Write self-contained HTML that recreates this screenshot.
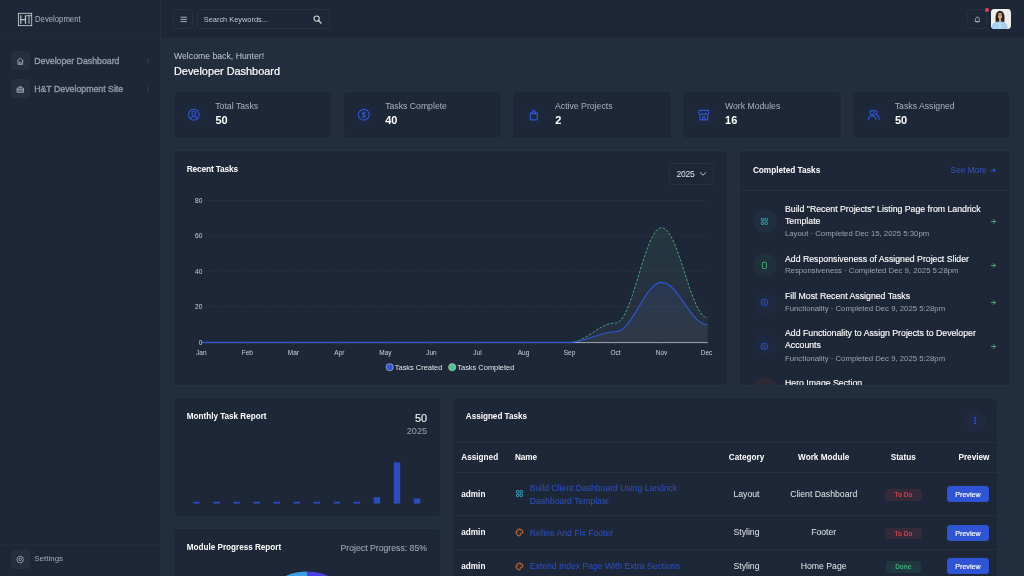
<!DOCTYPE html>
<html lang="en">
<head>
<meta charset="utf-8">
<title>Developer Dashboard</title>
<style>
*{box-sizing:border-box;margin:0;padding:0}
html,body{width:1024px;height:576px;overflow:hidden;background:#222d3d;font-family:"Liberation Sans",sans-serif;color:#fff}
body{position:relative}
.abs{position:absolute}
.t{position:absolute;white-space:nowrap;line-height:1}
.b{font-weight:bold}
/* sidebar */
#sidebar{position:absolute;left:0;top:0;width:161px;height:576px;background:#1e2737;border-right:1px solid #253143}
#sb-head{position:absolute;left:0;top:0;width:160px;height:39px;border-bottom:1px solid #212b3b}
#sb-foot{position:absolute;left:0;top:544px;width:160px;height:32px;border-top:1px solid #222c3c}
.navico{position:absolute;left:10.8px;width:19.4px;height:19.2px;border-radius:3px;background:#252f3f}
.navico svg{position:absolute;left:5px;top:5.7px;width:8.6px;height:8.6px}
.navtxt{position:absolute;left:34.2px;font-size:8.78px;color:#8f98a7;-webkit-text-stroke:0.4px #8f98a7;white-space:nowrap;line-height:1}
.navchev{position:absolute;left:146px;width:4px;height:6px}
/* topbar */
#topbar{position:absolute;left:161px;top:0;width:863px;height:39px;background:#1e2737;border-bottom:1px solid #243042}
.tbtn{position:absolute;width:20px;height:20px;border:1px solid #253145;border-radius:3.5px;background:#1e2737}
/* cards */
.card{position:absolute;background:#1e2737;border-radius:3.5px;box-shadow:0 0 0 0.7px #273446}
.stat-l{position:absolute;left:41.6px;top:10.2px;font-size:8.7px;color:#aab2bf;white-space:nowrap;line-height:1}
.stat-v{position:absolute;left:41.7px;top:23.3px;font-size:11px;color:#fff;font-weight:bold;white-space:nowrap;line-height:1}
.stat-i{position:absolute;left:8.5px;top:10.8px;width:24px;height:24px;border-radius:50%;background:#1e283c}
.stat-i svg{position:absolute;left:5.2px;top:5.2px;width:13.6px;height:13.6px}
.hline{position:absolute;height:1px;background:#253040}
.ci{position:absolute;margin-top:-0.1px;left:12.9px;width:24px;height:24px;border-radius:50%}
.ci svg{position:absolute;left:7.5px;top:7.7px;width:8.8px;height:8.8px}
.ct{position:absolute;left:45.2px;margin-top:0.7px;font-size:8.74px;color:#fff;white-space:nowrap;line-height:1;-webkit-text-stroke:0.14px #fff}
.cs{position:absolute;left:45.2px;margin-top:0.5px;font-size:7.77px;color:#9aa3b1;white-space:nowrap;line-height:1}
.th{position:absolute;margin-top:1px;font-size:8.2px;font-weight:bold;color:#fff;white-space:nowrap;line-height:1}
.td{position:absolute;font-size:8.7px;color:#e3e6ea;white-space:nowrap;line-height:1}
.tl{position:absolute;font-size:8.62px;color:#2d50c8;white-space:nowrap;line-height:1}
.c{text-align:center}
.bdg{position:absolute;width:36.8px;height:11.6px;border-radius:3.2px;font-size:6.5px;font-weight:bold;text-align:center;line-height:12.2px;white-space:nowrap}
.bdg.red{background:#342a39;color:#c2424f}
.bdg.grn{background:#20393f;color:#3fa978}
.btn{position:absolute;left:494.4px;width:41.7px;height:16.1px;border-radius:3.2px;background:#2f55d4;color:#f4f6fb;font-size:7.1px;-webkit-text-stroke:0.18px #f4f6fb;text-align:center;line-height:18.6px;overflow:hidden}
</style>
</head>
<body>
<div id="root" style="position:absolute;left:0;top:0;width:1024px;height:576px;will-change:transform">

<!-- SIDEBAR -->
<div id="sidebar">
  <div id="sb-head">
    <svg class="abs" style="left:17px;top:12px" width="16" height="15" viewBox="0 0 16 15">
      <rect x="1.35" y="1.25" width="13.4" height="12.45" fill="none" stroke="#e3e6eb" stroke-width="0.75"/>
      <path d="M3.800 3.300V11.800M8.500 3.300V11.800M3.800 7.600H8.500" fill="none" stroke="#bfc4cc" stroke-width="1.25"/>
      <path d="M9.500 3.700H14.400M12 3.700V11.800" fill="none" stroke="#bfc4cc" stroke-width="1.0"/>
    </svg>
    <div class="t" style="left:35.2px;top:15.2px;font-size:9px;color:#bcc1ca;transform:scaleX(0.86);transform-origin:0 0;opacity:0.9">Development</div>
  </div>
  <div class="navico" style="top:51px"><svg viewBox="0 0 24 24" fill="none" stroke="#b4bbc6" stroke-width="2.1" stroke-linejoin="round"><path d="M3 11.5L12 3.5L21 11.5M5.5 9.5V20.5H18.5V9.5M9.5 20.5V14.5H14.5V20.5"/></svg></div>
  <div class="navtxt" style="top:56.8px">Developer Dashboard</div>
  <svg class="navchev" style="top:58px" viewBox="0 0 4 6"><path d="M1 1L3 3L1 5" fill="none" stroke="#414c5d" stroke-width="0.8"/></svg>
  <div class="navico" style="top:79px"><svg viewBox="0 0 24 24" fill="none" stroke="#b4bbc6" stroke-width="2.1" stroke-linejoin="round"><path d="M3 8.500H21V20.500H3ZM8.500 8.500V5H15.500V8.500M3 13H21M3 16.800H21"/></svg></div>
  <div class="navtxt" style="top:84.8px">H&amp;T Development Site</div>
  <svg class="navchev" style="top:86px" viewBox="0 0 4 6"><path d="M1 1L3 3L1 5" fill="none" stroke="#414c5d" stroke-width="0.8"/></svg>
  <div id="sb-foot">
    <div class="navico" style="top:4.6px"><svg viewBox="0 0 24 24" fill="none" stroke="#b4bbc6" stroke-width="2.1"><circle cx="12" cy="12" r="3.6"/><path d="M12 3.2l2.2 1.5 2.6-.4 1.2 2.4 2.4 1.2-.4 2.6 1.5 2.2-1.5 2.2.4 2.6-2.4 1.2-1.2 2.4-2.6-.4-2.2 1.5-2.2-1.5-2.6.4-1.2-2.4-2.4-1.2.4-2.6L2.5 12.7 4 10.500l-.4-2.6 2.4-1.2 1.200-2.400 2.600.4z" stroke-linejoin="round"/></svg></div>
    <div class="navtxt" style="top:10.1px;font-size:8px;-webkit-text-stroke:0;color:#a3abb8">Settings</div>
  </div>
</div>

<!-- TOPBAR -->
<div id="topbar">
  <div class="tbtn" style="left:12px;top:9px"><svg class="abs" style="left:5.5px;top:5.6px" width="8" height="7" viewBox="0 0 8 7"><path d="M0.9 1.2H6.5M0.9 3.4H6.5M0.9 5.6H6.5" stroke="#d5d9e0" stroke-width="0.75" stroke-linecap="round"/></svg></div>
  <div class="tbtn" style="left:36px;top:9px;width:133px"></div>
  <div class="t" style="left:42.8px;top:15.7px;font-size:7.4px;color:#c3c9d3">Search Keywords...</div>
  <svg class="abs" style="left:151.6px;top:15.1px" width="9" height="9" viewBox="0 0 10 10"><circle cx="4" cy="4" r="2.9" fill="none" stroke="#d3d6db" stroke-width="1.2"/><path d="M6.200 6.200L8.800 8.800" stroke="#d3d6db" stroke-width="1.5" stroke-linecap="round"/></svg>
  <div class="tbtn" style="left:806px;top:9px"><svg class="abs" style="left:5.6px;top:5.7px" width="6.8" height="7.65" viewBox="0 0 8 9"><path d="M1.2 6.5C1.9 5.6 1.9 5 1.9 3.8C1.9 2.3 2.8 1.2 4 1.2C5.2 1.200 6.100 2.300 6.100 3.800C6.100 5 6.100 5.600 6.800 6.500Z" fill="none" stroke="#cfd4db" stroke-width="0.85" stroke-linejoin="round"/><path d="M3.1 7.3C3.400 8 4.600 8 4.900 7.300" fill="none" stroke="#cfd4db" stroke-width="0.85"/></svg></div>
  <div class="abs" style="left:823.6px;top:7.5px;width:4.4px;height:4.4px;border-radius:50%;background:#e2414f"></div>
  <div class="abs" id="avatar" style="left:830.1px;top:9.1px;width:19.5px;height:19.9px;border-radius:3.8px;background:#efeff0;overflow:hidden">
    <svg width="19.4" height="19.9" viewBox="0 0 20 20" preserveAspectRatio="none">
      <rect width="20" height="20" fill="#eeeeef"/><g transform="translate(-0.7,0)">
      <path d="M5.900 14.300C4.800 9 5 2 10 1.800C15 2 15.200 9 14.100 14.300Z" fill="#2d1f1a"/>
      <rect x="8.900" y="8.500" width="2.200" height="4.500" fill="#cfa48d"/>
      <ellipse cx="10" cy="6.700" rx="2.150" ry="2.900" fill="#d3a992"/>
      <path d="M7.900 6.100H12.100" stroke="#4a3a35" stroke-width="0.550"/>
      <path d="M1.300 20C1.300 14.600 4.300 12.800 8.600 12.500L10 13.700L11.400 12.500C15.700 12.800 17.400 14.600 17.400 20Z" fill="#a6cff1"/>
      <path d="M8.300 12.800L9.300 20H10.700L11.700 12.800L10 13.900Z" fill="#c3e0f8"/>
      <path d="M15.300 18.600L17.800 17.700L18 19.200L15.600 19.600Z" fill="#d9b29e"/></g>
    </svg>
  </div>
</div>

<!-- HEADINGS -->
<div class="t" style="left:174px;top:51.9px;font-size:8.7px;color:#c3c9d3">Welcome back, Hunter!</div>
<div class="t" style="left:174px;top:66.3px;font-size:10.9px;color:#fff;-webkit-text-stroke:0.2px #fff">Developer Dashboard</div>

<!-- STAT CARDS -->
<div class="card" style="left:173.70px;top:92.0px;width:157.2px;height:45.9px"><div class="stat-i"><svg viewBox="0 0 24 24" fill="none" stroke="#2f55d4" stroke-width="2"><circle cx="12" cy="12" r="9.5"/><circle cx="12" cy="9.5" r="3.4"/><path d="M5.800 19C7 15.500 9.500 14.700 12 14.700C14.500 14.700 17 15.500 18.200 19"/></svg></div><div class="stat-l">Total Tasks</div><div class="stat-v">50</div></div>
<div class="card" style="left:343.57px;top:92.0px;width:157.2px;height:45.9px"><div class="stat-i"><svg viewBox="0 0 24 24" fill="none" stroke="#2f55d4" stroke-width="2"><circle cx="12" cy="12" r="9.5"/><path d="M14.800 9.300C14.300 8.200 13.300 7.800 12 7.800C10.400 7.800 9.300 8.600 9.300 9.800C9.300 12.600 14.800 11.200 14.800 14.100C14.800 15.400 13.600 16.200 12 16.200C10.500 16.200 9.500 15.700 9.100 14.600M12 5.800V18.200" stroke-width="1.8"/></svg></div><div class="stat-l">Tasks Complete</div><div class="stat-v">40</div></div>
<div class="card" style="left:513.45px;top:92.0px;width:157.2px;height:45.9px"><div class="stat-i"><svg viewBox="0 0 24 24" fill="none" stroke="#2f55d4" stroke-width="2.1" stroke-linejoin="round"><path d="M5.8 9H18.2V19.4C18.2 20.3 17.500 21 16.600 21H7.400C6.500 21 5.800 20.300 5.800 19.400ZM9.500 11.800V7.300C9.500 5.600 10.500 4.500 12 4.500C13.500 4.500 14.500 5.600 14.500 7.300V11.800"/></svg></div><div class="stat-l">Active Projects</div><div class="stat-v">2</div></div>
<div class="card" style="left:683.33px;top:92.0px;width:157.2px;height:45.9px"><div class="stat-i"><svg viewBox="0 0 24 24" fill="none" stroke="#2f55d4" stroke-width="2" stroke-linejoin="round"><path d="M4.300 4.300H19.700L20.800 8.800C20.800 10.500 19.700 11.600 18 11.600C16.300 11.600 15 10.500 15 8.800C15 10.500 13.700 11.600 12 11.600C10.300 11.600 9 10.500 9 8.800C9 10.500 7.700 11.600 6 11.600C4.300 11.600 3.200 10.500 3.200 8.800ZM5.200 11.600V21H18.800V11.600M10 21V16H14V21"/></svg></div><div class="stat-l">Work Modules</div><div class="stat-v">16</div></div>
<div class="card" style="left:853.20px;top:92.0px;width:157.2px;height:45.9px"><div class="stat-i"><svg viewBox="0 0 24 24" fill="none" stroke="#2f55d4" stroke-width="2" stroke-linecap="round"><circle cx="9" cy="8" r="3.800"/><path d="M2.500 20C2.500 15.500 5.500 13.800 9 13.800C12.500 13.800 15.500 15.500 15.500 20M14.500 4.500C16.600 4.500 18 6 18 8C18 9.600 17.200 10.700 16 11.300C19 12 21.500 14 21.500 20"/></svg></div><div class="stat-l">Tasks Assigned</div><div class="stat-v">50</div></div>

<!-- RECENT TASKS -->
<div class="card" id="recent" style="left:173.7px;top:151.2px;width:553.6px;height:233.7px">
</div>
<div class="t b" style="left:186.7px;top:165.3px;font-size:8.4px;letter-spacing:-0.17px;color:#fff">Recent Tasks</div>
<div class="abs" style="left:669.4px;top:163.4px;width:44.8px;height:21.3px;border:1px solid #253145;border-radius:3.5px"></div>
<div class="t" style="left:676.6px;top:169.8px;font-size:8.5px;letter-spacing:-0.3px;color:#dfe3e9">2025</div>
<svg class="abs" style="left:699.2px;top:171.3px" width="8" height="6" viewBox="0 0 8 6"><path d="M1.400 1.700L4 4.200L6.600 1.700" fill="none" stroke="#d0d4db" stroke-width="0.95" stroke-linecap="round" stroke-linejoin="round"/></svg>
<svg class="abs" style="left:174px;top:190px" width="552" height="190" viewBox="174 190 552 190">
  <defs>
    <linearGradient id="gb" gradientUnits="userSpaceOnUse" x1="0" y1="282.4" x2="0" y2="342.4"><stop offset="0" stop-color="rgb(47,85,212)" stop-opacity="0.13"/><stop offset="1" stop-color="rgb(170,175,190)" stop-opacity="0.07"/></linearGradient>
    <linearGradient id="gg" gradientUnits="userSpaceOnUse" x1="0" y1="227.7" x2="0" y2="342.4"><stop offset="0" stop-color="rgb(79,174,131)" stop-opacity="0.12"/><stop offset="1" stop-color="rgb(160,165,175)" stop-opacity="0.06"/></linearGradient>
  </defs>
  <g stroke="#313d50" stroke-width="0.7" stroke-dasharray="1.1 1.1">
    <path d="M203.700 200.600H707.600M203.700 235.900H707.600M203.700 271.200H707.600M203.700 306.500H707.600"/>
  </g>
  <path d="M569.5 342.4 C586.6 342.4 598.5 323.0 615.6 323.0 C632.6 323.0 644.6 227.7 661.6 227.7 C678.6 227.7 690.6 317.7 707.6 317.7 V342.4Z" fill="url(#gg)"/>
  <path d="M569.5 342.4 C586.6 342.4 598.5 331.8 615.6 331.8 C632.6 331.8 644.6 282.4 661.6 282.4 C678.6 282.4 690.6 324.8 707.6 324.8 V342.4Z" fill="url(#gb)"/>
  <path d="M247.3 343.2V345.6M293.4 343.2V345.6M339.4 343.2V345.6M385.4 343.2V345.6M431.5 343.2V345.6M477.5 343.2V345.6M523.5 343.2V345.6M569.5 343.2V345.6M615.6 343.2V345.6M661.6 343.2V345.6M707.6 343.2V345.6" stroke="#384354" stroke-width="0.6"/>
  <path d="M201.3 342.6H707.6" stroke="#d9dde3" stroke-width="0.7"/>
  <path d="M201.3 342.4 L569.5 342.4 C586.6 342.4 598.5 323.0 615.6 323.0 C632.6 323.0 644.6 227.7 661.6 227.7 C678.6 227.7 690.6 317.7 707.6 317.7" fill="none" stroke="#4aa87e" stroke-width="1" stroke-dasharray="2.5 1.6"/>
  <path d="M201.3 342.4 L569.5 342.4 C586.6 342.4 598.5 331.8 615.6 331.8 C632.6 331.8 644.6 282.4 661.6 282.4 C678.6 282.4 690.6 324.8 707.6 324.8" fill="none" stroke="#2f55d4" stroke-width="1.100"/>
  <g font-family="Liberation Sans, sans-serif" font-size="6.6" fill="#cdd2d9" text-anchor="end">
    <text x="202.400" y="203.0">80</text><text x="202.400" y="238.3">60</text><text x="202.400" y="273.6">40</text><text x="202.400" y="308.9">20</text><text x="202.400" y="344.8">0</text>
  </g>
  <g font-family="Liberation Sans, sans-serif" font-size="6.5" fill="#cdd2d9" text-anchor="middle">
    <text x="201.3" y="355.0">Jan</text><text x="247.3" y="355.0">Feb</text><text x="293.4" y="355.0">Mar</text><text x="339.4" y="355.0">Apr</text><text x="385.4" y="355.0">May</text><text x="431.5" y="355.0">Jun</text><text x="477.5" y="355.0">Jul</text><text x="523.5" y="355.0">Aug</text><text x="569.5" y="355.0">Sep</text><text x="615.6" y="355.0">Oct</text><text x="661.6" y="355.0">Nov</text><text x="706.600" y="355.0">Dec</text>
  </g>
  <circle cx="389.700" cy="367.200" r="3.600" fill="#2f55d4" stroke="#dfe3e9" stroke-width="0.5"/>
  <circle cx="452.200" cy="367.200" r="3.600" fill="#52c08f" stroke="#dfe3e9" stroke-width="0.5"/>
  <g font-family="Liberation Sans, sans-serif" font-size="7.45" fill="#e3e6eb">
    <text x="394.800" y="369.800">Tasks Created</text><text x="457.300" y="369.800">Tasks Completed</text>
  </g>
</svg>

<!-- COMPLETED TASKS -->
<div class="card" id="completed" style="left:739.8px;top:151.2px;width:270.6px;height:233.7px;overflow:hidden"><div class="abs" style="left:0px;top:0;width:271px;height:240px">
  <div class="hline" style="left:0;top:39.1px;width:271px"></div>
  <div class="t b" style="left:13.1px;top:14.4px;font-size:8.3px;letter-spacing:-0.05px">Completed Tasks</div>
  <div class="t" style="left:210.800px;top:15.000px;font-size:8.300px;color:#2f55d4">See More</div>
  <svg class="abs" style="left:250.9px;top:16.8px" width="5" height="5" viewBox="0 0 5 5"><path d="M0.5 2.5H4.2M2.5 0.600L4.400 2.500L2.500 4.400" fill="none" stroke="#2f55d4" stroke-width="0.95" stroke-linecap="round" stroke-linejoin="round"/></svg>

  <!-- item 1 -->
  <div class="ci" style="top:58.300px;background:#1f2f40"><svg viewBox="0 0 24 24" fill="none" stroke="#35b5cf" stroke-width="2.2"><rect x="3.600" y="3.600" width="6.800" height="6.800" rx="2"/><rect x="13.600" y="3.600" width="6.800" height="6.800" rx="2"/><rect x="3.600" y="13.600" width="6.800" height="6.800" rx="2"/><rect x="13.600" y="13.600" width="6.800" height="6.800" rx="2"/></svg></div>
  <div class="ct" style="top:53.400px">Build "Recent Projects" Listing Page from Landrick</div>
  <div class="ct" style="top:65.400px">Template</div>
  <div class="cs" style="top:78.800px">Layout · Completed Dec 15, 2025 5:30pm</div>
  <svg class="abs" style="left:250.9px;top:67.9px" width="5" height="5" viewBox="0 0 5 5"><path d="M0.5 2.5H4.2M2.5 0.600L4.400 2.500L2.500 4.400" fill="none" stroke="#4fae83" stroke-width="0.95" stroke-linecap="round" stroke-linejoin="round"/></svg>
  <!-- item 2 -->
  <div class="ci" style="top:101.900px;background:#1f303b"><svg viewBox="0 0 24 24" fill="none" stroke="#4fc088" stroke-width="2.200"><rect x="6.500" y="3.500" width="11" height="17" rx="2.200"/></svg></div>
  <div class="ct" style="top:103.200px">Add Responsiveness of Assigned Project Slider</div>
  <div class="cs" style="top:115.700px">Responsiveness · Completed Dec 9, 2025 5:28pm</div>
  <svg class="abs" style="left:250.9px;top:111.7px" width="5" height="5" viewBox="0 0 5 5"><path d="M0.5 2.5H4.2M2.5 0.600L4.400 2.500L2.500 4.400" fill="none" stroke="#4fae83" stroke-width="0.95" stroke-linecap="round" stroke-linejoin="round"/></svg>
  <!-- item 3 -->
  <div class="ci" style="top:139.600px;background:#1e2940"><svg viewBox="0 0 24 24" fill="none" stroke="#2f55d4" stroke-width="2.7"><circle cx="12" cy="12" r="2.900" stroke-width="2.300"/><path d="M12 3.200L14.600 4.700L17.600 4.400L18.800 7.200L21.200 9L20.300 12L21.200 15L18.800 16.800L17.600 19.600L14.600 19.300L12 20.800L9.400 19.300L6.400 19.600L5.200 16.800L2.800 15L3.700 12L2.800 9L5.200 7.200L6.400 4.400L9.400 4.700Z" stroke-linejoin="round"/></svg></div>
  <div class="ct" style="top:140.500px">Fill Most Recent Assigned Tasks</div>
  <div class="cs" style="top:153.400px">Functionality · Completed Dec 9, 2025 5:28pm</div>
  <svg class="abs" style="left:250.9px;top:148.9px" width="5" height="5" viewBox="0 0 5 5"><path d="M0.5 2.5H4.2M2.5 0.600L4.400 2.500L2.500 4.400" fill="none" stroke="#4fae83" stroke-width="0.95" stroke-linecap="round" stroke-linejoin="round"/></svg>
  <!-- item 4 -->
  <div class="ci" style="top:183.200px;background:#1e2940"><svg viewBox="0 0 24 24" fill="none" stroke="#2f55d4" stroke-width="2.7"><circle cx="12" cy="12" r="2.900" stroke-width="2.300"/><path d="M12 3.200L14.600 4.700L17.600 4.400L18.800 7.200L21.200 9L20.300 12L21.200 15L18.800 16.800L17.600 19.600L14.600 19.300L12 20.800L9.400 19.300L6.400 19.600L5.200 16.800L2.800 15L3.700 12L2.800 9L5.200 7.200L6.400 4.400L9.400 4.700Z" stroke-linejoin="round"/></svg></div>
  <div class="ct" style="top:177.400px">Add Functionality to Assign Projects to Developer</div>
  <div class="ct" style="top:189.500px">Accounts</div>
  <div class="cs" style="top:202.900px">Functionality · Completed Dec 9, 2025 5:28pm</div>
  <svg class="abs" style="left:250.9px;top:192.7px" width="5" height="5" viewBox="0 0 5 5"><path d="M0.5 2.5H4.2M2.5 0.600L4.400 2.500L2.500 4.400" fill="none" stroke="#4fae83" stroke-width="0.95" stroke-linecap="round" stroke-linejoin="round"/></svg>
  <!-- item 5 -->
  <div class="ci" style="top:226.200px;background:#2c2a35"></div>
  <div class="ct" style="top:227.100px">Hero Image Section</div>
</div></div>

<!-- MONTHLY -->
<div class="card" id="monthly" style="left:173.7px;top:398.1px;width:266.6px;height:117.7px"></div>
<div class="t b" style="left:186.8px;top:412.9px;font-size:8.15px">Monthly Task Report</div>
<div class="t" style="right:597px;top:412.800px;font-size:10.87px;color:#eef0f3;-webkit-text-stroke:0.15px #eef0f3">50</div>
<div class="t" style="right:597px;top:427.100px;font-size:9.100px;color:#9aa3b1">2025</div>
<svg class="abs" style="left:186px;top:455px" width="245" height="52" viewBox="186 455 245 52">
  <g fill="#2c4dbd" transform="translate(0,0.3)">
    <rect x="193.300" y="501.500" width="6.400" height="1.800"/><rect x="213.350" y="501.500" width="6.400" height="1.800"/><rect x="233.400" y="501.500" width="6.400" height="1.800"/><rect x="253.450" y="501.500" width="6.400" height="1.800"/><rect x="273.500" y="501.500" width="6.400" height="1.800"/><rect x="293.550" y="501.500" width="6.400" height="1.800"/><rect x="313.600" y="501.500" width="6.400" height="1.800"/><rect x="333.650" y="501.500" width="6.400" height="1.800"/><rect x="353.700" y="501.500" width="6.400" height="1.800"/>
    <rect x="373.750" y="496.900" width="6.400" height="6.400"/><rect x="393.800" y="462" width="6.400" height="41.300"/><rect x="413.850" y="498.200" width="6.400" height="5.100"/>
  </g>
</svg>

<!-- MODULE PROGRESS -->
<div class="card" id="module" style="left:173.7px;top:529.3px;width:266.6px;height:60px"></div>
<div class="t b" style="left:186.8px;top:544.1px;font-size:8.15px">Module Progress Report</div>
<div class="t" style="right:597px;top:543.300px;font-size:8.700px;color:#9aa3b1;margin-top:0.4px;-webkit-text-stroke:0.12px #9aa3b1">Project Progress: 85%</div>
<svg class="abs" style="left:247px;top:566px" width="120" height="10" viewBox="247 566 120 10">
  <circle cx="307" cy="626.300" r="55.300" fill="#182030"/>
  <path d="M307 626.300V571.600A54.700 54.700 0 0 0 252.300 626.300Z" fill="#3a9fe4"/>
  <path d="M307 626.300V571.600A54.700 54.700 0 0 1 361.700 626.300Z" fill="#4a3fe0"/>
</svg>

<!-- ASSIGNED TASKS -->
<div class="card" id="assigned" style="left:452.7px;top:398.1px;width:544.8px;height:200px;overflow:hidden"><div class="abs" style="left:0;top:-0.8px;width:545px;height:200px">
  <div class="t b" style="left:13.1px;top:16px;font-size:8.15px">Assigned Tasks</div>
  <div class="abs" style="left:512.2px;top:13.5px;width:19.8px;height:19.8px;border-radius:50%;background:#1f2a40;box-shadow:inset 0 0 0 0.6px #22304f"></div>
  <svg class="abs" style="left:521.100px;top:19.900px" width="2" height="7" viewBox="0 0 2 7"><g fill="#2a49b8"><rect x="0" y="0" width="2" height="1.900"/><rect x="0" y="2.550" width="2" height="1.900"/><rect x="0" y="5.100" width="2" height="1.900"/></g></svg>
  <div class="hline" style="left:0;top:44.500px;width:545px"></div>
  <div class="hline" style="left:0;top:74.500px;width:545px"></div>
  <div class="hline" style="left:0;top:117.500px;width:545px"></div>
  <div class="hline" style="left:0;top:151.400px;width:545px"></div>
  <!-- header -->
  <div class="th" style="left:8.600px;top:56px">Assigned</div>
  <div class="th" style="left:62.200px;top:56px">Name</div>
  <div class="th c" style="left:243.800px;width:100px;top:56px">Category</div>
  <div class="th c" style="left:321px;width:100px;top:56px">Work Module</div>
  <div class="th c" style="left:400.500px;width:100px;top:56px">Status</div>
  <div class="th" style="right:8.300px;top:56px">Preview</div>
  <!-- row 1 -->
  <div class="th" style="left:8.600px;top:92.800px">admin</div>
  <svg class="abs" style="left:62px;top:91.600px" width="9" height="9" viewBox="0 0 24 24" fill="none" stroke="#35b5cf" stroke-width="2.400"><rect x="4" y="4" width="6.500" height="6.500" rx="1.800"/><rect x="13.500" y="4" width="6.500" height="6.500" rx="1.800"/><rect x="4" y="13.500" width="6.500" height="6.500" rx="1.800"/><rect x="13.500" y="13.500" width="6.500" height="6.500" rx="1.800"/></svg>
  <div class="tl" style="left:77.100px;top:87.000px">Build Client Dashboard Using Landrick</div>
  <div class="tl" style="left:77.100px;top:99.900px">Dashboard Template</div>
  <div class="td c" style="left:243.800px;width:100px;top:92.800px">Layout</div>
  <div class="td c" style="left:321px;width:100px;top:92.800px">Client Dashboard</div>
  <div class="bdg red" style="left:432.400px;top:91.900px">To Do</div>
  <div class="btn" style="top:89px">Preview</div>
  <!-- row 2 -->
  <div class="th" style="left:8.600px;top:130.900px">admin</div>
  <svg class="abs pal" style="left:62px;top:130.400px" width="9" height="9" viewBox="0 0 24 24"><path d="M12 3C7 3 3 7 3 12C3 17 7 21 12 21C13.400 21 14.300 20 14.300 18.900C14.300 17.600 13.500 17.200 13.500 16.200C13.500 15.200 14.300 14.500 15.300 14.500H17.500C19.500 14.500 21 13 21 11C21 6.500 17 3 12 3Z" fill="none" stroke="#ee7f35" stroke-width="2.600"/><circle cx="7.800" cy="11.500" r="1.300" fill="#ee7f35"/><circle cx="10.500" cy="7.800" r="1.300" fill="#ee7f35"/><circle cx="15" cy="7.800" r="1.300" fill="#ee7f35"/></svg>
  <div class="tl" style="left:77.100px;top:131.300px">Refine And Fix Footer</div>
  <div class="td c" style="left:243.800px;width:100px;top:130.900px">Styling</div>
  <div class="td c" style="left:321px;width:100px;top:130.900px">Footer</div>
  <div class="bdg red" style="left:432.400px;top:130.300px">To Do</div>
  <div class="btn" style="top:127.700px">Preview</div>
  <!-- row 3 -->
  <div class="th" style="left:8.600px;top:164.800px">admin</div>
  <svg class="abs pal" style="left:62px;top:164.300px" width="9" height="9" viewBox="0 0 24 24"><path d="M12 3C7 3 3 7 3 12C3 17 7 21 12 21C13.400 21 14.300 20 14.300 18.900C14.300 17.600 13.500 17.200 13.500 16.200C13.500 15.200 14.300 14.500 15.300 14.500H17.500C19.500 14.500 21 13 21 11C21 6.500 17 3 12 3Z" fill="none" stroke="#ee7f35" stroke-width="2.600"/><circle cx="7.800" cy="11.500" r="1.300" fill="#ee7f35"/><circle cx="10.500" cy="7.800" r="1.300" fill="#ee7f35"/><circle cx="15" cy="7.800" r="1.300" fill="#ee7f35"/></svg>
  <div class="tl" style="left:77.100px;top:165.100px">Extend Index Page With Extra Sections</div>
  <div class="td c" style="left:243.800px;width:100px;top:164.800px">Styling</div>
  <div class="td c" style="left:321px;width:100px;top:164.800px">Home Page</div>
  <div class="bdg grn" style="left:433.300px;width:34.600px;top:163.900px">Done</div>
  <div class="btn" style="top:161px">Preview</div>
</div></div>




</div>
</body>
</html>
